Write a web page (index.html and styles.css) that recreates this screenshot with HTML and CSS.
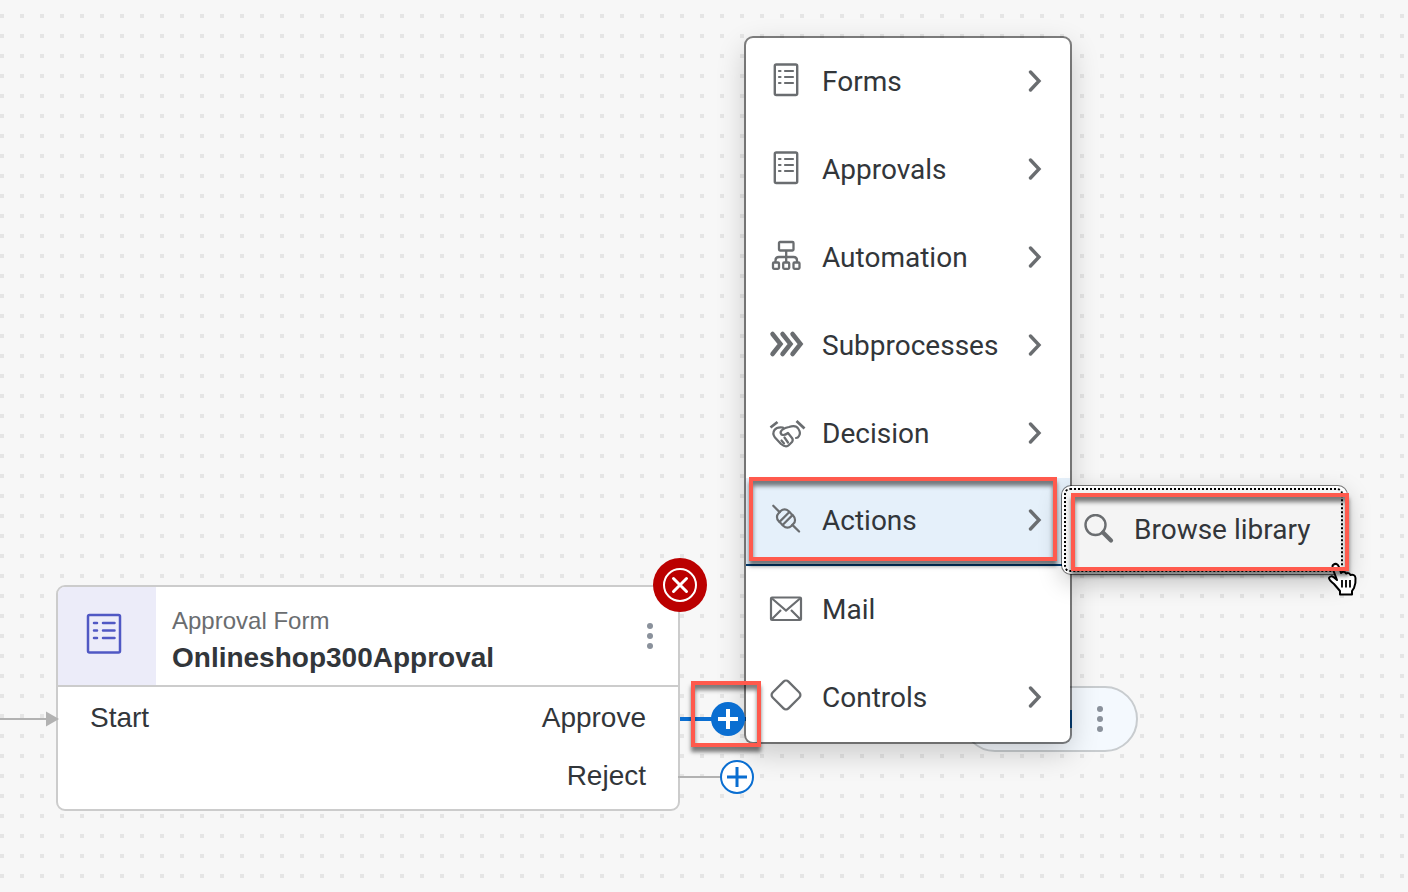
FILE: index.html
```html
<!DOCTYPE html>
<html lang="en">
<head>
<meta charset="utf-8">
<title>Process editor</title>
<link rel="stylesheet" href="styles.css">
</head>
<body>
<svg class="defs" aria-hidden="true">
  <symbol id="form" viewBox="0 0 26 34"><g fill="none" stroke="currentColor" stroke-width="2.400"><rect x="1.800" y="1.500" width="22.400" height="30.500" rx="1.500"/><path stroke-width="2.200" stroke-linecap="round" d="M6 8h1.500M12 8h8M6 14h1.500M12 14h8M6 20h1.500M12 20h8"/></g></symbol>
  <symbol id="chevron" viewBox="0 0 14 22"><path d="M2.500 2l8.500 9-8.500 9" fill="none" stroke="currentColor" stroke-width="3.400" stroke-linecap="round" stroke-linejoin="miter"/></symbol>
</svg>
<main class="canvas">
  <svg class="link link-in" width="60" height="16" viewBox="0 0 60 16" aria-hidden="true"><path d="M0 8h47" stroke="#b2b2b2" stroke-width="2"/></svg>

  <section class="card">
    <header class="card-head">
      <div class="card-icon"><svg width="36" height="42" viewBox="0 0 36 42" aria-hidden="true"><g fill="none" stroke="#5058c4" stroke-width="2.500"><rect x="2" y="2" width="32" height="37.500" rx="1.500"/><path stroke-linecap="round" d="M8 10h3M17 10h11.500M8 17.500h3M17 17.500h11.500M8 25h3M17 25h11.500"/></g></svg></div>
      <div class="card-titles"><p class="card-type">Approval Form</p><h1 class="card-name">Onlineshop300Approval</h1></div>
      <button class="dots" aria-label="More options"><i></i><i></i><i></i></button>
    </header>
    <div class="card-body">
      <span class="port">Start</span>
      <div class="outcomes"><span class="port">Approve</span><span class="port">Reject</span></div>
    </div>
  </section>
  <svg class="link link-in" width="60" height="16" viewBox="0 0 60 16" aria-hidden="true"><path d="M46 0.500L59 8 46 15.500z" fill="#b2b2b2"/></svg>

  <svg class="error" width="54" height="54" viewBox="0 0 54 54" role="img" aria-label="Error"><circle cx="27" cy="27" r="27" fill="#b00"/><circle cx="27" cy="27" r="16" fill="none" stroke="#fff" stroke-width="2"/><path d="M20.500 20.500l13 13M33.500 20.500l-13 13" stroke="#fff" stroke-width="3" stroke-linecap="round"/></svg>

  <svg class="link link-approve" width="68" height="4" aria-hidden="true"><path d="M0 2h68" stroke="#0a6ed1" stroke-width="4"/></svg>
  <svg class="link link-reject" width="44" height="2" aria-hidden="true"><path d="M0 1h44" stroke="#b2b2b2" stroke-width="2"/></svg>
  <div class="end-node"><i class="end-mark"></i><button class="dots" aria-label="End options"><i></i><i></i><i></i></button></div>

  <nav class="menu">
    <button class="item"><svg class="ico" viewBox="0 0 36 36"><use href="#form" x="5" y="0" width="26" height="34"/></svg><span>Forms</span><svg class="chev"><use href="#chevron"/></svg></button>
    <button class="item"><svg class="ico" viewBox="0 0 36 36"><use href="#form" x="5" y="0" width="26" height="34"/></svg><span>Approvals</span><svg class="chev"><use href="#chevron"/></svg></button>
    <button class="item"><svg class="ico" viewBox="0 0 36 36"><g fill="none" stroke="currentColor" stroke-width="2.300"><rect x="11" y="3" width="14.500" height="8.500" rx="1"/><path d="M18.200 11.500v12M7.500 23.500v-2q0-3.500 3.500-3.500h14.500q3.500 0 3.500 3.500v2"/><rect x="5" y="23.500" width="6" height="6.300" rx="1"/><rect x="15.200" y="23.500" width="6" height="6.300" rx="1"/><rect x="25.500" y="23.500" width="6" height="6.300" rx="1"/></g></svg><span>Automation</span><svg class="chev"><use href="#chevron"/></svg></button>
    <button class="item"><svg class="ico" viewBox="0 0 36 36"><path d="M4.500 7l8 10-8 10M14.500 7l8 10-8 10M24.500 7l8 10-8 10" fill="none" stroke="currentColor" stroke-width="4.500" stroke-linecap="round" stroke-linejoin="miter"/></svg><span>Subprocesses</span><svg class="chev"><use href="#chevron"/></svg></button>
    <button class="item"><svg class="ico" viewBox="0 0 36 36"><g fill="none" stroke="currentColor" stroke-width="2.200" stroke-linecap="round" stroke-linejoin="round"><path d="M2.500 12.500l7-5.500M28.500 6l8 7.500" stroke-width="2.800" stroke-linecap="butt"/><path d="M15 12.500Q9 11.500 6.500 15 4 18.500 7 22.500l6 6.500q5 4 8 1l3-3q1.500-2 0-4l-4-5q-4 3-6.500 1.500Q11.500 17 14 15q3-2.500 7-3 7-2.500 9.500 2 2.500 4 .500 7-1 2-3 2"/><path d="M13.500 25.500l2.500 3M16.500 22.500l3.500 5"/></g></svg><span>Decision</span><svg class="chev"><use href="#chevron"/></svg></button>
    <button class="item selected"><svg class="ico" viewBox="0 0 36 36"><g transform="translate(18 16.500) rotate(45)" fill="none" stroke="currentColor" stroke-width="2.200" stroke-linecap="round"><path d="M-18 0h9M9 0h9.500"/><rect x="-9" y="-7" width="18" height="14" rx="5.500"/><path d="M-2.200-7v14M2.200-7v14"/></g></svg><span>Actions</span><svg class="chev"><use href="#chevron"/></svg></button>
    <button class="item"><svg class="ico" viewBox="0 0 36 36"><g fill="none" stroke="currentColor" stroke-width="2.200"><rect x="3" y="6.500" width="30" height="22.500" rx="1"/><path d="M4 7.500l14 12 14-12M4 28l9-9M32 28l-9-9"/></g></svg><span>Mail</span></button>
    <button class="item"><svg class="ico" viewBox="0 0 36 36"><rect x="6.800" y="4.800" width="22.400" height="22.400" rx="3.500" transform="rotate(45 18 16)" fill="none" stroke="currentColor" stroke-width="2.300"/></svg><span>Controls</span><svg class="chev"><use href="#chevron"/></svg></button>
  </nav>

  <button class="add add-approve" aria-label="Add step after Approve"><svg width="34" height="34" viewBox="0 0 34 34"><circle cx="17" cy="17" r="17" fill="#0a6ed1"/><path d="M7 17h20M17 7v20" stroke="#fff" stroke-width="4"/></svg></button>
  <button class="add add-reject" aria-label="Add step after Reject"><svg width="34" height="34" viewBox="0 0 34 34"><circle cx="17" cy="17" r="16" fill="#fff" stroke="#0a6ed1" stroke-width="2"/><path d="M7 17h20M17 7v20" stroke="#0a6ed1" stroke-width="3"/></svg></button>

  <nav class="submenu">
    <button class="sub-item"><svg class="search" viewBox="0 0 30 30"><g fill="none" stroke="currentColor"><circle cx="11.500" cy="11" r="10" stroke-width="2.400"/><path d="M19 18.500l8 8" stroke-width="4.200" stroke-linecap="round"/></g></svg><span>Browse library</span></button>
  </nav>

  <svg class="cursor" width="34" height="36" viewBox="0 0 34 36" aria-hidden="true"><path d="M8 3q4-3 6 2l2 6q3-2.500 5 .500 3-1.500 4.500 1.500 4.500-1 5 3 .500 5-1.500 10l-2 3v3.500H15V29l-6-7q-5-4-5-6 1.500-3 5-.500l3 2.500L8 7.500Q7 4 8 3z" fill="#fff" stroke="#000" stroke-width="2" stroke-linejoin="round"/><path d="M17 18v7.500M21 18v7.500M25 18v7.500" stroke="#000" stroke-width="1.800"/></svg>
  <div class="mark mark-add"></div>
  <div class="mark mark-actions"></div>
  <div class="mark mark-library"></div>
</main>
</body>
</html>
```
FILE: styles.css
```css
* { box-sizing: border-box; }
body { margin: 0; color: #32363a; font-family: "Liberation Sans", Arial, sans-serif; }
button { border: 0; padding: 0; background: none; color: inherit; font: inherit; cursor: pointer; }
p, h1 { margin: 0; }
.defs { position: absolute; width: 0; height: 0; }

.canvas {
  position: relative;
  min-height: 100vh;
  overflow: hidden;
  background: conic-gradient(from 270deg at 4px 4px, #e5e5e5 90deg, transparent 0) 0 14px / 20px 20px, #f7f7f7;
}

.link, .card, .error, .end-node, .menu, .submenu, .add, .mark, .cursor { position: absolute; }
.link-in { left: 0; top: 711px; }
.link-approve { left: 680px; top: 717px; }
.link-reject { left: 678px; top: 776px; }

.card { left: 56px; top: 585px; width: 624px; border: 2px solid #ccc; border-radius: 9px; background: #fff; overflow: hidden; }
.card-head { display: flex; height: 100px; border-bottom: 2px solid #ccc; }
.card-icon { display: flex; align-items: center; justify-content: center; width: 98px; padding: 0 6px 4px 0; background: #ececf9; }
.card-titles { flex: 1; padding: 18px 16px 0; }
.card-type { font-size: 24px; line-height: 32px; color: #6a6d70; }
.card-name { font-size: 28px; line-height: 42px; }
.dots { display: flex; flex-direction: column; align-items: center; justify-content: center; gap: 4px; width: 24px; }
.dots i { width: 6px; height: 6px; border-radius: 50%; background: #8a919b; }
.card-head .dots { margin-right: 16px; }
.card-body { display: flex; justify-content: space-between; padding: 2px 32px 4px; }
.port { font-size: 28px; line-height: 58px; }
.outcomes { display: flex; flex-direction: column; align-items: flex-end; }

.error { left: 653px; top: 558px; }

.end-node { display: flex; align-items: center; justify-content: flex-end; gap: 16px; left: 962px; top: 686px; width: 176px; height: 66px; padding-right: 24px; border: 2px solid #c8cccf; border-radius: 33px; background: #f4f9fe; }
.end-mark { width: 26px; height: 18px; background: #0a6ed1; }

.menu { left: 746px; top: 38px; width: 324px; border-radius: 7px; background: #fff; box-shadow: 0 0 0 2px rgba(0,0,0,.48), 0 10px 30px rgba(0,0,0,.2); font-family: Roboto, sans-serif; font-size: 28px; }
.item { display: flex; align-items: center; gap: 18px; width: 100%; height: 88px; padding: 0 28px 2px 22px; text-align: left; }
.item span { flex: 1; }
.item.selected { background: #e5f0fa; border-bottom: 2px solid #003b70; }
.ico { width: 36px; height: 36px; color: #6a6d70; overflow: visible; }
.chev { width: 14px; height: 22px; color: #6a6d70; }

.add { width: 34px; height: 34px; }
.add svg { display: block; }
.add-approve { left: 711px; top: 702px; }
.add-reject { left: 720px; top: 760px; }

.submenu { left: 1062px; top: 486px; width: 285px; padding: 2px; border-radius: 9px; background: #fff; box-shadow: 0 0 0 1px rgba(0,0,0,.5), 0 8px 24px rgba(0,0,0,.22); font-family: Roboto, sans-serif; font-size: 28px; }
.sub-item { display: flex; align-items: center; gap: 20px; width: 279px; height: 84px; padding: 0 18px 2px; border: 2px dotted #000; border-radius: 6px; background: #f4f4f4; }
.search { width: 30px; height: 30px; color: #6a6d70; }

.mark { border: 4px solid #ff5a4d; box-shadow: 0 5px 4px rgba(0,0,0,.5), inset 0 5px 4px rgba(0,0,0,.5); pointer-events: none; }
.mark-add { left: 691px; top: 681px; width: 70px; height: 66px; }
.mark-actions { left: 749px; top: 477px; width: 308px; height: 84px; }
.mark-library { left: 1071px; top: 493px; width: 278px; height: 78px; }
.cursor { left: 1325px; top: 562px; }
```
